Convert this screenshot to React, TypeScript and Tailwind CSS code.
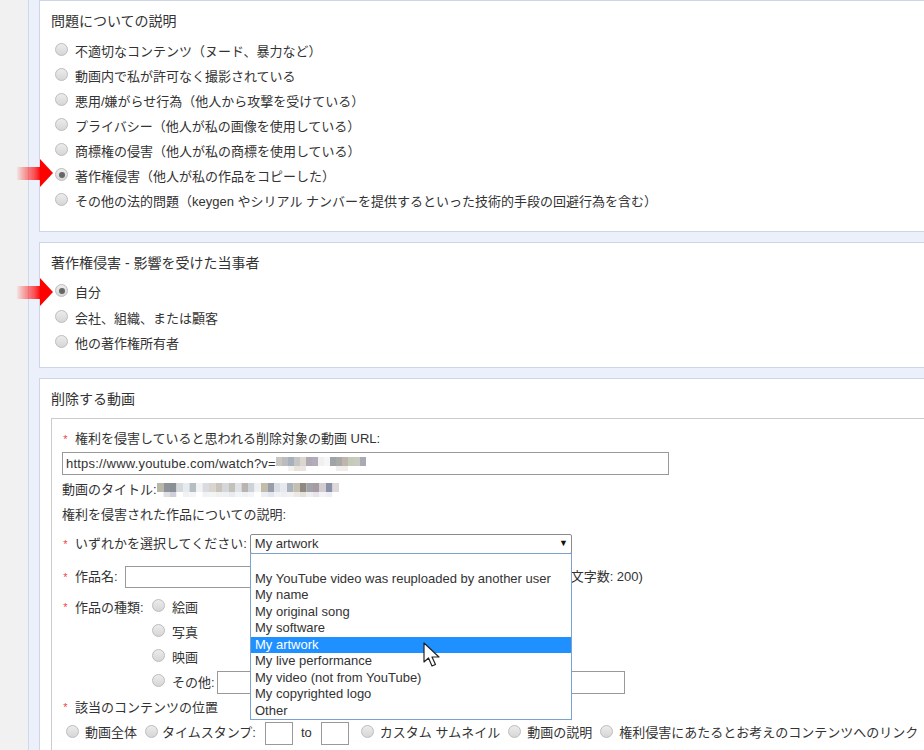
const font = "font-['Liberation_Sans','Noto_Sans_CJK_JP',sans-serif]";

function Radio({ checked = false }: { checked?: boolean }) {
  return (
    <span className="relative -top-[2px] inline-flex h-[13px] w-[13px] shrink-0 items-center justify-center rounded-full border border-[#bcbcbc] bg-[linear-gradient(#ececec,#d6d6d6)]">
      {checked && <span className="h-[6px] w-[6px] rounded-full bg-[#666666]" />}
    </span>
  );
}

function Row({ label, checked = false, extra = "" }: { label: string; checked?: boolean; extra?: string }) {
  return (
    <div className={`flex h-[25px] items-center gap-[7px] pl-[4px] ${extra}`}>
      <Radio checked={checked} />
      <span className="whitespace-nowrap">{label}</span>
    </div>
  );
}

function Star() {
  return <span className="mr-[6px] inline-block w-[7px] text-center text-[11px] leading-none text-[#f04444]">*</span>;
}

function Arrow({ pos }: { pos: string }) {
  return (
    <svg className={`absolute left-[17px] h-[28px] w-[36px] ${pos}`} viewBox="0 0 36 28">
      <defs>
        <linearGradient id="fade" x1="0" x2="1" y1="0" y2="0">
          <stop offset="0" stopColor="#ff0000" stopOpacity="0.05" />
          <stop offset="0.7" stopColor="#ff2222" stopOpacity="0.75" />
          <stop offset="1" stopColor="#ff0000" />
        </linearGradient>
      </defs>
      <rect x="0" y="8" width="24" height="13" fill="url(#fade)" />
      <polygon points="23,0 36,14 23,28" fill="#ff0000" />
    </svg>
  );
}

const urlBlocks = ["#c9c7c0", "#bbbcc0", "#a8b0bc", "#c4c6c4", "#dcd6cc", "#b0a8b4", "#b4acb8", "#f0f0f0", "#f6f6f6", "#9ea4a8", "#a8aaa8", "#c0b4b0", "#c4ccb8", "#c8ccc0", "#a8aab4"];
const urlFaint = ["#ffffff", "#ffffff", "#f4f2ee", "#e8e4dc", "#ece4e4", "#ffffff", "#ffffff", "#ffffff", "#ffffff", "#ffffff", "#f0eef0", "#eef0e8", "#ffffff", "#ffffff", "#ffffff"];
const titleBlocks = ["#b8b8a8", "#8f9299", "#8a8f95", "#d5d8dc", "#e8ebee", "#b5bec4", "#f2f2f4", "#d9dbe0", "#d8d4d0", "#c9c3bc", "#d4d6da", "#c4c0bc", "#dfe3e6", "#b9b4b2", "#ccd4da", "#eef0f2", "#c0bda8", "#9a9ca8", "#d8dce4", "#e6e8ee", "#aab2bc", "#c4bfb0", "#8e8a80", "#a0a4a8", "#a89aa4", "#d0ccd0", "#8a90a8", "#dcd8dc"];
const titleFaint = ["#ffffff", "#dfe0e4", "#d0d0dc", "#ffffff", "#f0f2f4", "#f4f4f6", "#ffffff", "#f0f2f6", "#f4f4f2", "#f0f0f0", "#eef0f4", "#e8ecf0", "#f2f4f6", "#eef2f4", "#f4f4f6", "#ffffff", "#eceef2", "#e4e6ee", "#f0f2f6", "#eeeef4", "#f0f2f4", "#ece8e4", "#e4e0dc", "#eeeef0", "#e8e4ec", "#f4f2f4", "#eceef4", "#ffffff"];

function Mosaic({ top, bottom, size, h }: { top: string[]; bottom: string[]; size: number; h: number }) {
  return (
    <svg width={top.length * size} height={h + 5} className="block">
      {top.map((c, i) => (
        <rect key={i} x={i * size} y={0} width={size} height={h} fill={c} />
      ))}
      {bottom.map((c, i) => (
        <rect key={i} x={i * size} y={h} width={size} height={5} fill={c} />
      ))}
    </svg>
  );
}

function Cursor() {
  return (
    <svg className="absolute left-[423px] top-[642px] h-[26px] w-[18px]" viewBox="0 0 18 26">
      <path d="M1 1 L1 20 L5.5 16 L9 24 L12.5 22.5 L9 15 L16 15 Z" fill="#ffffff" stroke="#222222" strokeWidth="1.2" strokeLinejoin="round" />
    </svg>
  );
}

const options = [
  "",
  "My YouTube video was reuploaded by another user",
  "My name",
  "My original song",
  "My software",
  "My artwork",
  "My live performance",
  "My video (not from YouTube)",
  "My copyrighted logo",
  "Other",
];

export default function App() {
  return (
    <div className={`${font} relative h-[750px] w-[924px] overflow-hidden bg-[#f1f1f1] text-[13px] text-[#333333]`}>
      <div className="ml-[28px] flex h-[750px] flex-col gap-[10px] border-l border-[#cfd9ec] bg-[#ebf0fa] pl-[10px]">
        <section className="h-[232px] w-[1000px] shrink-0 border border-[#cdd6e6] bg-white pl-[11px]">
          <h2 className="h-[35px] pt-[10px] text-[14px] leading-[20px] font-normal">問題についての説明</h2>
          <div className="pt-[3px]">
            <Row label="不適切なコンテンツ（ヌード、暴力など）" />
            <Row label="動画内で私が許可なく撮影されている" />
            <Row label="悪用/嫌がらせ行為（他人から攻撃を受けている）" />
            <Row label="プライバシー（他人が私の画像を使用している）" />
            <Row label="商標権の侵害（他人が私の商標を使用している）" />
            <Row label="著作権侵害（他人が私の作品をコピーした）" checked />
            <Row label="その他の法的問題（keygen やシリアル ナンバーを提供するといった技術的手段の回避行為を含む）" />
          </div>
        </section>
        <section className="h-[126px] w-[1000px] shrink-0 border border-[#cdd6e6] bg-white pl-[11px]">
          <h2 className="h-[35px] pt-[10px] text-[14px] leading-[20px] font-normal">著作権侵害 - 影響を受けた当事者</h2>
          <div className="pt-[2px]">
            <Row label="自分" checked />
            <Row label="会社、組織、または顧客" extra="mt-[1px]" />
            <Row label="他の著作権所有者" />
          </div>
        </section>
        <section className="w-[1000px] flex-1 border border-[#cdd6e6] bg-white pl-[11px]">
          <h2 className="h-[39px] pt-[10px] text-[14px] leading-[20px] font-normal">削除する動画</h2>
          <div className="h-[400px] w-[950px] border border-[#cccccc] pl-[10px] pt-[9px]">
            <div className="flex h-[22px] items-center">
              <Star />
              <span>権利を侵害していると思われる削除対象の動画 URL:</span>
            </div>
            <div className="mt-[2px] flex h-[23px] w-[607px] items-center border border-[#999999] pl-[3px]">
              <span className="tracking-[0.2px]">https://www.youtube.com/watch?v=</span>
              <Mosaic top={urlBlocks} bottom={urlFaint} size={6} h={9} />
            </div>
            <div className="flex h-[29px] items-center">
              <span>動画のタイトル:</span>
              <Mosaic top={titleBlocks} bottom={titleFaint} size={6.5} h={9} />
            </div>
            <div className="flex h-[22px] items-center">権利を侵害された作品についての説明:</div>
            <div className="mt-[8px] flex h-[20px] items-center">
              <Star />
              <span>いずれかを選択してください:</span>
              <div className="ml-[3px] flex h-[20px] w-[322px] items-center justify-between rounded-[2px] border border-[#8a8a8a] pl-[4px] pr-[3px]">
                <span>My artwork</span>
                <span className="text-[9px] text-[#111111]">▼</span>
              </div>
            </div>
            <div className="mt-[12px] flex h-[22px] items-center">
              <Star />
              <span>作品名:</span>
              <div className="ml-[7px] h-[22px] w-[130px] border border-[#999999]" />
              <span className="ml-[316px]">文字数: 200)</span>
            </div>
            <div className="mt-[7px] flex">
              <div className="flex h-[25px] w-[90px] items-center">
                <Star />
                <span>作品の種類:</span>
              </div>
              <div className="flex flex-col">
                <div className="flex h-[25px] items-center gap-[7px]"><Radio /><span>絵画</span></div>
                <div className="flex h-[25px] items-center gap-[7px]"><Radio /><span>写真</span></div>
                <div className="flex h-[25px] items-center gap-[7px]"><Radio /><span>映画</span></div>
                <div className="flex h-[25px] items-center gap-[7px]">
                  <Radio />
                  <span>その他:</span>
                  <div className="-ml-[5px] h-[23px] w-[408px] border border-[#999999]" />
                </div>
              </div>
            </div>
            <div className="flex h-[25px] items-center">
              <Star />
              <span>該当のコンテンツの位置</span>
            </div>
            <div className="flex h-[26px] items-center whitespace-nowrap pl-[4px]">
              <Radio />
              <span className="ml-[6px] shrink-0">動画全体</span>
              <span className="ml-[8px] flex"><Radio /></span>
              <span className="ml-[4px] shrink-0">タイムスタンプ:</span>
              <div className="ml-[9px] h-[23px] w-[28px] shrink-0 border border-[#999999]" />
              <span className="ml-[8px] mr-[9px] shrink-0">to</span>
              <div className="h-[23px] w-[28px] shrink-0 border border-[#999999]" />
              <span className="ml-[12px] flex"><Radio /></span>
              <span className="ml-[6px] shrink-0">カスタム サムネイル</span>
              <span className="ml-[8px] flex"><Radio /></span>
              <span className="ml-[6px] shrink-0">動画の説明</span>
              <span className="ml-[8px] flex"><Radio /></span>
              <span className="ml-[6px] shrink-0">権利侵害にあたるとお考えのコンテンツへのリンク</span>
            </div>
          </div>
        </section>
      </div>
      <Arrow pos="top-[159px]" />
      <Arrow pos="top-[278px]" />
      <div className="absolute left-[250px] top-[553px] w-[322px] border border-[#7da2ce] bg-white">
        {options.map((o, i) => (
          <div key={i} className={`h-[16.5px] pl-[4px] leading-[16.5px] ${o === "My artwork" ? "bg-[#1e90ff] text-white" : ""}`}>
            {o}
          </div>
        ))}
      </div>
      <Cursor />
    </div>
  );
}
